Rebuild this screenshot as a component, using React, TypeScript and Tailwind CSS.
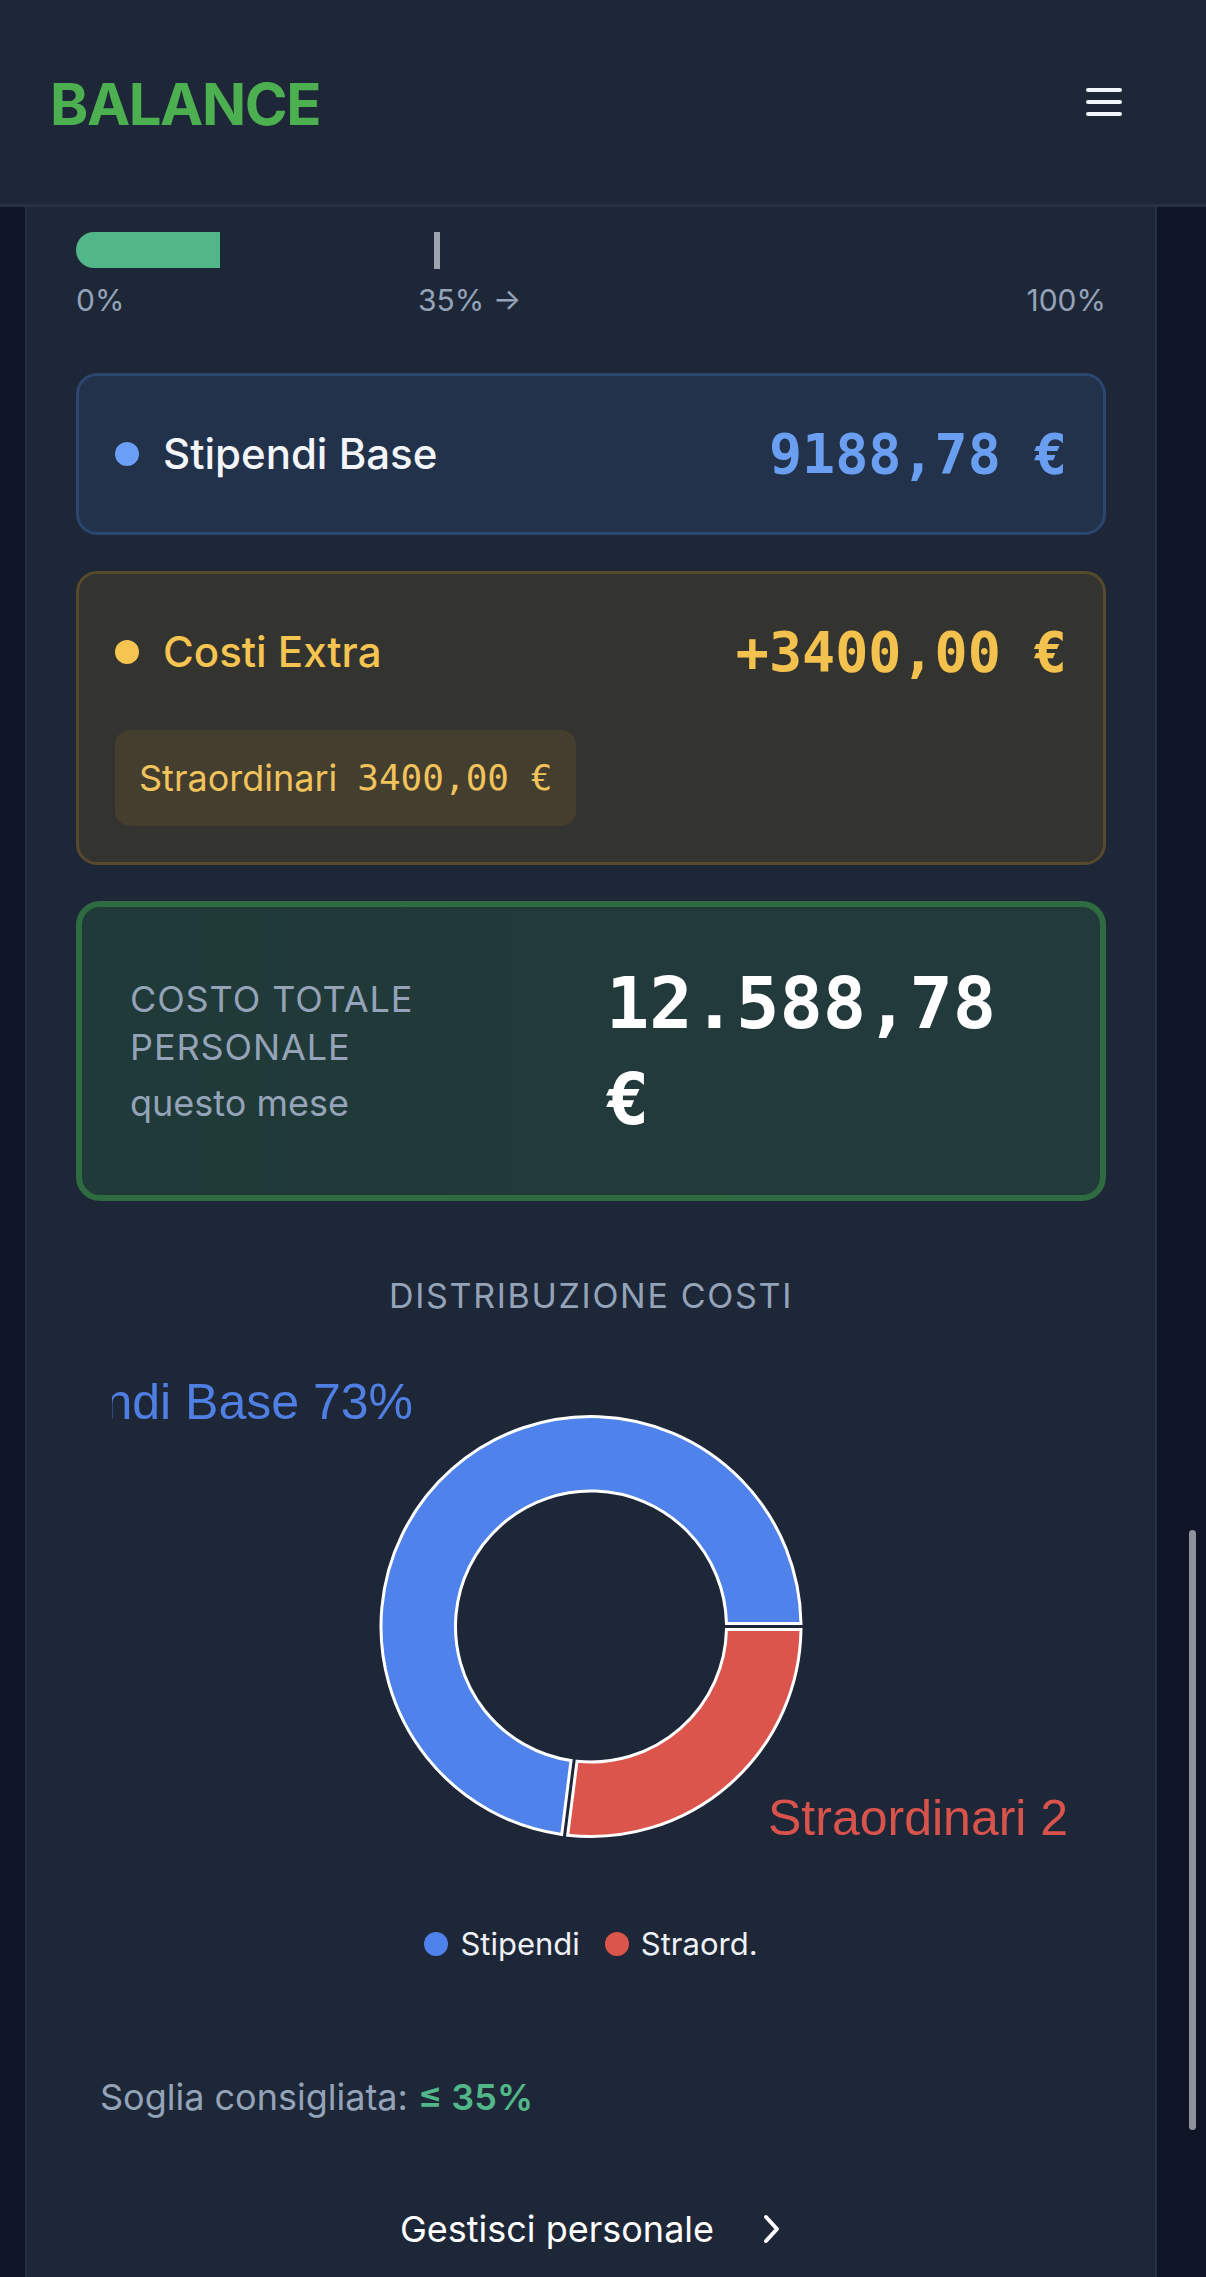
import React from "react";

const cx = 515;
const cy = 286.5;
const R = 210;
const r = 135.5;
const h = 3;

function pt(rad: number, ang: number) {
  return `${(cx + rad * Math.cos(ang)).toFixed(2)} ${(cy + rad * Math.sin(ang)).toFixed(2)}`;
}

function segPath(d0: number, d1: number) {
  const a0 = (d0 * Math.PI) / 180;
  const a1 = (d1 * Math.PI) / 180;
  const oa0 = a0 + Math.asin(h / R);
  const oa1 = a1 - Math.asin(h / R);
  const ia0 = a0 + Math.asin(h / r);
  const ia1 = a1 - Math.asin(h / r);
  const lo = oa1 - oa0 > Math.PI ? 1 : 0;
  const li = ia1 - ia0 > Math.PI ? 1 : 0;
  return `M ${pt(R, oa0)} A ${R} ${R} 0 ${lo} 1 ${pt(R, oa1)} L ${pt(r, ia1)} A ${r} ${r} 0 ${li} 0 ${pt(r, ia0)} Z`;
}

function Donut() {
  const split = 97.2;
  return (
    <svg width="1031" height="560" viewBox="0 0 1031 560" className="block">
      <defs>
        <clipPath id="chartclip">
          <rect x="36" y="0" width="958" height="560" />
        </clipPath>
      </defs>
      <g clipPath="url(#chartclip)">
        <path d={segPath(split, 360)} fill="#4f82ea" stroke="#ffffff" strokeWidth="3" />
        <path d={segPath(0, split)} fill="#dc554c" stroke="#ffffff" strokeWidth="3" />
        <text
          x="337"
          y="79"
          textAnchor="end"
          fill="#4f7fe2"
          style={{ fontFamily: "'Liberation Sans', Arial, sans-serif", fontSize: 50 }}
        >
          Stipendi Base 73%
        </text>
        <text
          x="692"
          y="495"
          textAnchor="start"
          fill="#d9534d"
          style={{ fontFamily: "'Liberation Sans', Arial, sans-serif", fontSize: 50 }}
        >
          Straordinari 27%
        </text>
      </g>
    </svg>
  );
}

export default function App() {
  return (
    <div className="relative w-[1206px] h-[2277px] overflow-hidden bg-[#0f1526] font-['Inter',sans-serif]">
      {/* Header */}
      <header className="flex items-center justify-between h-[207px] pl-[50px] pr-[84px] bg-[#1e2738] border-b-[3px] border-[#283143]">
        <div className="text-[58px] leading-none font-bold tracking-tight text-[#4caf50] pt-[4px]">BALANCE</div>
        <div className="flex flex-col gap-[8px] w-[36px]">
          <div className="h-[4px] rounded-full bg-[#f3f6fb]" />
          <div className="h-[4px] rounded-full bg-[#f3f6fb]" />
          <div className="h-[4px] rounded-full bg-[#f3f6fb]" />
        </div>
      </header>

      {/* Panel */}
      <main className="ml-[25px] w-[1132px] h-[2070px] bg-[#1e2738] border-x-[2px] border-[#263042] px-[49px] pt-[25px]">
        {/* Progress */}
        <div className="relative h-[36px]">
          <div className="absolute left-0 top-0 h-[36px] w-[144px] rounded-l-full bg-[#52b788]" />
          <div className="absolute left-[358px] top-0 h-[37px] w-[6px] bg-[#9ca3af]" />
        </div>
        <div className="relative mt-[10px] h-[45px] flex justify-between text-[30px] leading-[45px] text-[#94a3b8]">
          <span>0%</span>
          <span className="absolute left-[342px] top-0">35% →</span>
          <span>100%</span>
        </div>

        {/* Stipendi Base */}
        <div className="mt-[50px] rounded-[21px] border-[3px] border-[#2c4670] bg-[#22324b] p-[36px]">
          <div className="flex items-center justify-between h-[84px]">
            <div className="flex items-center gap-[24px]">
              <div className="w-[24px] h-[24px] rounded-full bg-[#6a9ff5]" />
              <span className="text-[42px] leading-[60px] font-medium text-[#f3f5f9]">Stipendi Base</span>
            </div>
            <span className="font-['DejaVu_Sans_Mono',monospace] font-bold text-[55px] leading-[84px] text-[#6a9ef0]">
              9188,78 €
            </span>
          </div>
        </div>

        {/* Costi Extra */}
        <div className="mt-[36px] rounded-[21px] border-[3px] border-[#574a2c] bg-[#33332f] p-[36px]">
          <div className="flex items-center justify-between h-[84px]">
            <div className="flex items-center gap-[24px]">
              <div className="w-[24px] h-[24px] rounded-full bg-[#f5c451]" />
              <span className="text-[42px] leading-[60px] font-medium text-[#f5c451]">Costi Extra</span>
            </div>
            <span className="font-['DejaVu_Sans_Mono',monospace] font-bold text-[55px] leading-[84px] text-[#f2c14e]">
              +3400,00 €
            </span>
          </div>
          <div className="mt-[36px] inline-flex items-center gap-[20px] rounded-[15px] bg-[#443e2e] px-[24px] py-[24px]">
            <span className="text-[36px] leading-[48px] text-[#f0c35c]">Straordinari</span>
            <span className="font-['DejaVu_Sans_Mono',monospace] text-[36px] leading-[48px] text-[#f0c35c]">3400,00 €</span>
          </div>
        </div>

        {/* Totale */}
        <div className="mt-[36px] rounded-[24px] border-[6px] border-[#2f6b40] bg-gradient-to-r from-[#1f3a38] via-[#223a3a] to-[#233a3d] p-[48px] grid grid-cols-2 gap-x-[30px] items-center">
          <div className="text-[#94a3b8]">
            <div className="text-[36px] leading-[48px] tracking-wide uppercase">Costo totale personale</div>
            <div className="mt-[8px] text-[36px] leading-[48px]">questo mese</div>
          </div>
          <div className="font-['DejaVu_Sans_Mono',monospace] font-bold text-[72px] leading-[96px] text-white">
            12.588,78 €
          </div>
        </div>

        {/* Distribuzione */}
        <div className="mt-[71px] text-center text-[34px] leading-[48px] tracking-[0.05em] text-[#94a3b8]">
          DISTRIBUZIONE COSTI
        </div>
        <div className="mt-[20px]">
          <Donut />
        </div>
        <div className="mt-[21px] h-[45px] flex items-center justify-center gap-[25px] text-[31px] leading-[45px] text-[#eef1f6]">
          <div className="flex items-center gap-[12px]">
            <div className="w-[24px] h-[24px] rounded-full bg-[#4f82ea]" />
            <span>Stipendi</span>
          </div>
          <div className="flex items-center gap-[12px]">
            <div className="w-[24px] h-[24px] rounded-full bg-[#dc554c]" />
            <span>Straord.</span>
          </div>
        </div>

        {/* Soglia */}
        <div className="mt-[104px] pl-[24px] text-[36px] leading-[54px] text-[#94a3b8]">
          Soglia consigliata: <span className="font-semibold text-[#52b788]">≤ 35%</span>
        </div>

        {/* Gestisci */}
        <div className="mt-[78px] flex items-center justify-center gap-[48px] text-[36px] leading-[54px] text-white">
          <span>Gestisci personale</span>
          <svg width="20" height="30" viewBox="0 0 20 30" fill="none">
            <path d="M4 3 L15 15 L4 27" stroke="#ffffff" strokeWidth="4" strokeLinecap="round" strokeLinejoin="round" />
          </svg>
        </div>
      </main>

      {/* Scrollbar overlay */}
      <div className="absolute right-[10px] top-[1530px] w-[7px] h-[600px] rounded-full bg-[#8d929b]" />
    </div>
  );
}
